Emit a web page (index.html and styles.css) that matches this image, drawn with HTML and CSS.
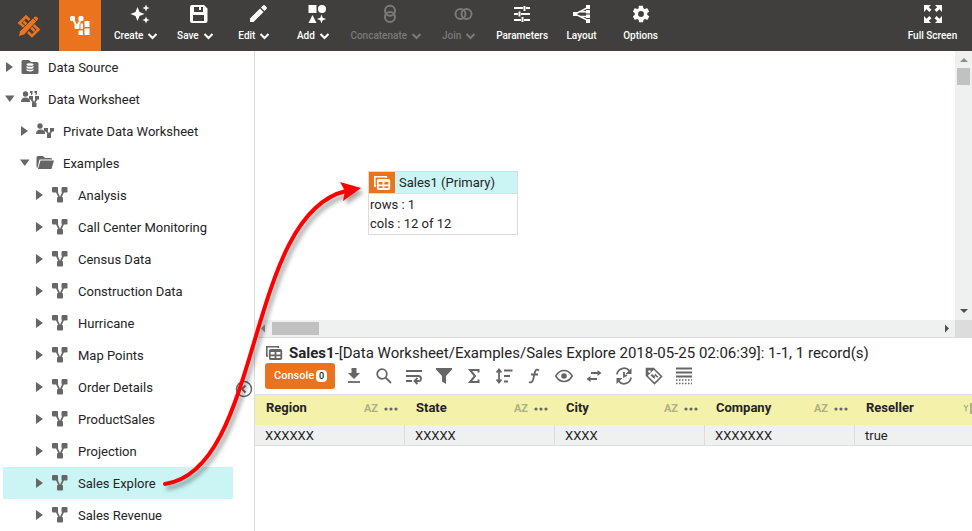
FILE: index.html
```html
<!DOCTYPE html>
<html lang="en">
<head>
<meta charset="utf-8">
<title>Data Worksheet</title>
<link rel="stylesheet" href="styles.css">
</head>
<body>
<svg class="defs" width="0" height="0" aria-hidden="true">
  <symbol id="chev" viewBox="0 0 22 10"><path d="M5.500 3l4 4 4-4" fill="none" stroke="currentColor" stroke-width="2"/></symbol>
  <symbol id="closed" viewBox="0 0 10 12"><path d="M1 1v10L8 6z" fill="currentColor"/></symbol>
  <symbol id="open" viewBox="0 0 10 12"><path d="M0 2.500h9.500L4.800 9z" fill="currentColor"/></symbol>
  <symbol id="sheet" viewBox="0 0 18 18"><path d="M5 4l4 9M13 4L9 13" stroke="currentColor" stroke-width="1.800"/><rect x="1" y="1" width="6" height="5.500" rx="1" fill="currentColor"/><rect x="10.500" y="1" width="6" height="5.500" rx="1" fill="currentColor"/><rect x="6" y="11" width="6" height="5.500" rx="1" fill="currentColor"/></symbol>
  <symbol id="tables" viewBox="0 0 18 16"><path d="M3 11H1.800V1.800h11.500V3" fill="none" stroke="currentColor" stroke-width="1.600"/><rect x="4.800" y="4.800" width="11.500" height="9.200" rx="1" fill="none" stroke="currentColor" stroke-width="1.800"/><path d="M4.500 6h12M4.500 10.300h12M10.500 6v8" stroke="currentColor" stroke-width="1.800"/></symbol>
</svg>

<header class="topbar">
  <button class="home" aria-label="Composer"><svg width="24" height="24" viewBox="0 0 24 24"><path d="M8 13.500L2.500 9 9 2.500 12.500 6M6.500 7.500L10 11M16 10.500l5.500 5L15 22l-4-4M17.500 17l-3.500-3.500" fill="none" stroke="currentColor" stroke-width="2.600"/><path d="M2.500 17.500L17.500 2.500q1.500-1 3 .5t.5 3L7 21l-5.500 1.500z" fill="currentColor" stroke="#403f3d" stroke-width=".8"/><path d="M16 4l4 4" stroke="#403f3d" stroke-width=".8"/></svg></button>
  <button class="mode" aria-label="Worksheet"><svg width="20" height="20" viewBox="0 0 20 20"><path d="M3 3l4 8M11 3l-4 8" stroke="#fff" stroke-width="2"/><g fill="#fff"><rect width="5" height="5" rx="1.500"/><rect x="8.500" width="5" height="5" rx="1.500"/><rect x="4.500" y="8" width="5" height="5" rx="1.500"/><rect x="14.500" y="5" width="5" height="6"/><rect x="14.500" y="12.500" width="5" height="6.500"/><rect x="8.500" y="14.500" width="4.500" height="4.500"/><path d="M10.500 7.500H13V13h-2.500z"/></g></svg></button>
  <nav class="tools">
    <button class="tool"><svg width="20" height="20" viewBox="0 0 20 20"><path d="M7.500 3l2 5 5 2-5 2-2 5-2-5-5-2 5-2zM16 .5l1 2.500 2.500 1-2.500 1-1 2.500-1-2.500-2.500-1 2.500-1zM16 12.500l1 2.500 2.500 1-2.500 1-1 2.500-1-2.500-2.500-1 2.500-1z" fill="currentColor"/></svg><span class="label">Create<svg class="chev"><use href="#chev"/></svg></span></button>
    <button class="tool"><svg width="20" height="20" viewBox="0 0 20 20"><path fill-rule="evenodd" d="M3 1h12l3.500 3.500V17q0 2-2 2H3q-2 0-2-2V3q0-2 2-2zM5 3v5h9V3h-2v3h-2V3zM4 11v6h11v-6z" fill="currentColor"/></svg><span class="label">Save<svg class="chev"><use href="#chev"/></svg></span></button>
    <button class="tool"><svg width="20" height="20" viewBox="0 0 20 20"><path d="M2 14.500L12 4.500 15.500 8l-10 10H2zM13 3.500l2-2q1-.8 2 0l1.500 1.500q.8 1 0 2l-2 2z" fill="currentColor"/></svg><span class="label">Edit<svg class="chev"><use href="#chev"/></svg></span></button>
    <button class="tool"><svg width="20" height="20" viewBox="0 0 20 20"><path d="M1.500 1h8v8h-8zM5.500 11l4 8h-8zM14.500 10.500l1.200 3.200 3.500 1.300-3.500 1.300-1.200 3.200-1.200-3.200L9.800 15l3.500-1.300z" fill="currentColor"/><circle cx="15" cy="5" r="4" fill="currentColor"/></svg><span class="label">Add<svg class="chev"><use href="#chev"/></svg></span></button>
    <button class="tool" disabled><svg width="20" height="20" viewBox="0 0 20 20"><g fill="none" stroke="currentColor" stroke-width="2"><circle cx="10" cy="6.800" r="5"/><circle cx="10" cy="13" r="5"/></g></svg><span class="label">Concatenate<svg class="chev"><use href="#chev"/></svg></span></button>
    <button class="tool" disabled><svg width="20" height="20" viewBox="0 0 20 20"><g fill="none" stroke="currentColor" stroke-width="2"><circle cx="7.500" cy="10" r="5"/><circle cx="13.500" cy="10" r="5"/></g></svg><span class="label">Join<svg class="chev"><use href="#chev"/></svg></span></button>
    <button class="tool"><svg width="20" height="20" viewBox="0 0 20 20"><path d="M2 4h9M14 4h4M12.500 2v5M2 10h4M9 10h9M7.500 7.500v5M2 16h7M12 16h6M10.500 13v5" stroke="currentColor" stroke-width="2"/></svg><span class="label">Parameters</span></button>
    <button class="tool"><svg width="20" height="20" viewBox="0 0 20 20"><path d="M16 3.500L3 10l13 6.500M8 7.500L16 8M8 12.500h8" fill="none" stroke="currentColor" stroke-width="1.400"/><path d="M1 8h4v4H1zM14 1h4v4h-4zM14 6h4v3.500h-4zM14 10.500h4V14h-4zM14 15h4v4h-4z" fill="currentColor"/></svg><span class="label">Layout</span></button>
    <button class="tool"><svg width="20" height="20" viewBox="0 0 24 24"><path fill="currentColor" d="M19.400 13c0-.3.100-.7.100-1s0-.7-.1-1l2.100-1.700c.2-.1.200-.4.100-.6l-2-3.500c-.1-.2-.4-.3-.6-.2l-2.500 1c-.5-.4-1.100-.7-1.700-1l-.4-2.600c0-.2-.2-.4-.5-.4h-4c-.2 0-.5.200-.5.400L9.200 5c-.6.300-1.200.6-1.700 1L5 5c-.2-.1-.5 0-.6.200l-2 3.500c-.1.200-.1.500.1.600L4.600 11c0 .3-.1.700-.1 1s0 .7.100 1l-2.100 1.700c-.2.100-.2.400-.1.600l2 3.500c.1.200.4.300.6.200l2.500-1c.5.400 1.100.7 1.700 1l.4 2.600c0 .2.200.4.500.4h4c.2 0 .5-.2.500-.4l.4-2.600c.6-.3 1.200-.6 1.700-1l2.500 1c.2.100.5 0 .6-.2l2-3.500c.1-.2.100-.5-.1-.6zM12 15.500a3.500 3.500 0 110-7 3.500 3.500 0 010 7z"/></svg><span class="label">Options</span></button>
  </nav>
  <button class="tool full"><svg width="20" height="20" viewBox="0 0 20 20"><path d="M1 1h7L5.800 3.200l2.700 2.600-2.200 2.200-2.700-2.700L1 8zM19 1h-7l2.200 2.200-2.700 2.600 2.200 2.200 2.700-2.700L19 8zM1 19h7l-2.200-2.200 2.700-2.600L6.300 12l-2.700 2.700L1 12zM19 19h-7l2.200-2.200-2.700-2.600 2.200-2.200 2.700 2.700L19 12z" fill="currentColor"/></svg><span class="label">Full Screen</span></button>
</header>

<main class="workspace">
  <aside class="sidebar">
    <ul class="tree">
      <li class="node"><svg class="twisty"><use href="#closed"/></svg><svg class="icon" viewBox="0 0 18 18"><path d="M2 2h6l2 2h6q1.500 0 1.500 1.500v9Q17.500 16 16 16H2Q.5 16 .5 14.500v-11Q.5 2 2 2z" fill="currentColor"/><g fill="#fff"><ellipse cx="9" cy="6.500" rx="3.500" ry="1.300"/><path d="M5.500 8q3.500 1.700 7 0v2q-3.500 1.700-7 0zM5.500 11q3.500 1.700 7 0v1.500q-3.500 2-7 0z"/></g></svg><a href="#source">Data Source</a></li>
      <li class="node"><svg class="twisty"><use href="#open"/></svg><svg class="icon" viewBox="0 0 18 18"><g fill="currentColor"><circle cx="4.500" cy="4" r="2.700"/><path d="M0 12q0-4.500 4.500-4.500T9 12zM9 1h2.500v3L10 5.500V3H9zM13.500 1H16v3l-1.500 1.500V3h-1zM8 6h4v3.500H8zM14 6h4v3.500h-4zM11 13h4.500v4H11z"/></g><path d="M10 8l3 6 3-6" fill="none" stroke="currentColor" stroke-width="1.700"/></svg><a href="#worksheet">Data Worksheet</a></li>
      <li class="node l1"><svg class="twisty"><use href="#closed"/></svg><svg class="icon" viewBox="0 0 18 18"><g fill="currentColor"><circle cx="4" cy="4" r="2.700"/><path d="M0 12q0-4.500 4.500-4.500T9 12zM8 6h4v3.500H8zM14 6h4v3.500h-4zM11 12h4v4h-4z"/></g><path d="M10 8l3 5 3-5" fill="none" stroke="currentColor" stroke-width="1.700"/></svg><a href="#private">Private Data Worksheet</a></li>
      <li class="node l1"><svg class="twisty"><use href="#open"/></svg><svg class="icon" viewBox="0 0 18 18"><path d="M2 2h5l2 2h6q1 0 1 1.500H3.500L1.500 14 .5 13V3.500Q.5 2 2 2zM4.500 6.500H18L15.500 15H2z" fill="currentColor"/></svg><a href="#examples">Examples</a></li>
      <li class="node l2"><svg class="twisty"><use href="#closed"/></svg><svg class="icon"><use href="#sheet"/></svg><a href="#analysis">Analysis</a></li>
      <li class="node l2"><svg class="twisty"><use href="#closed"/></svg><svg class="icon"><use href="#sheet"/></svg><a href="#calls">Call Center Monitoring</a></li>
      <li class="node l2"><svg class="twisty"><use href="#closed"/></svg><svg class="icon"><use href="#sheet"/></svg><a href="#census">Census Data</a></li>
      <li class="node l2"><svg class="twisty"><use href="#closed"/></svg><svg class="icon"><use href="#sheet"/></svg><a href="#construction">Construction Data</a></li>
      <li class="node l2"><svg class="twisty"><use href="#closed"/></svg><svg class="icon"><use href="#sheet"/></svg><a href="#hurricane">Hurricane</a></li>
      <li class="node l2"><svg class="twisty"><use href="#closed"/></svg><svg class="icon"><use href="#sheet"/></svg><a href="#map">Map Points</a></li>
      <li class="node l2"><svg class="twisty"><use href="#closed"/></svg><svg class="icon"><use href="#sheet"/></svg><a href="#orders">Order Details</a></li>
      <li class="node l2"><svg class="twisty"><use href="#closed"/></svg><svg class="icon"><use href="#sheet"/></svg><a href="#products">ProductSales</a></li>
      <li class="node l2"><svg class="twisty"><use href="#closed"/></svg><svg class="icon"><use href="#sheet"/></svg><a href="#projection">Projection</a></li>
      <li class="node l2 selected"><svg class="twisty"><use href="#closed"/></svg><svg class="icon"><use href="#sheet"/></svg><a href="#explore">Sales Explore</a></li>
      <li class="node l2"><svg class="twisty"><use href="#closed"/></svg><svg class="icon"><use href="#sheet"/></svg><a href="#revenue">Sales Revenue</a></li>
    </ul>
    <button class="collapse" aria-label="Collapse panel"><svg width="18" height="18" viewBox="0 0 18 18"><circle cx="9" cy="9" r="7.500" fill="#fff" stroke="currentColor" stroke-width="1.500"/><path d="M10.500 5.500L7 9l3.500 3.500" fill="none" stroke="currentColor" stroke-width="1.800"/></svg></button>
  </aside>

  <section class="work">
    <div class="graph">
      <div class="canvas">
        <article class="assembly">
          <h2 class="assembly-head"><span class="badge"><svg width="18" height="16"><use href="#tables"/></svg></span>Sales1 (Primary)</h2>
          <p>rows : 1</p>
          <p>cols : 12 of 12</p>
        </article>
      </div>
      <div class="vbar"><svg width="17" height="17" viewBox="0 0 17 17"><path d="M5 11l4-4 4 4z" fill="#8e8e8e"/></svg><span class="vthumb"></span><svg class="end" width="17" height="17" viewBox="0 0 17 17"><path d="M5 6l4 4 4-4z" fill="#505050"/></svg></div>
      <div class="hbar"><svg width="17" height="17" viewBox="0 0 17 17"><path d="M10 4.500v8l-4-4z" fill="#8e8e8e"/></svg><span class="hthumb"></span><svg class="end" width="17" height="17" viewBox="0 0 17 17"><path d="M7 4.500v8l4-4z" fill="#505050"/></svg></div>
      <div class="corner"></div>
    </div>

    <div class="preview">
      <div class="title"><svg width="18" height="16"><use href="#tables"/></svg><span><strong>Sales1</strong>-[Data Worksheet/Examples/Sales Explore 2018-05-25 02:06:39]: 1-1, 1 record(s)</span></div>
      <div class="actions">
        <button class="console">Console<span class="count">0</span></button>
        <button class="act" aria-label="Export"><svg viewBox="0 0 18 18"><path d="M6.500 1h5v5H15l-6 6-6-6h3.500z" fill="currentColor"/><path d="M3 15h12" stroke="currentColor" stroke-width="1.800"/></svg></button>
        <button class="act" aria-label="Search"><svg viewBox="0 0 18 18"><g fill="none" stroke="currentColor" stroke-width="1.800"><circle cx="7" cy="7" r="4.800"/><path d="M10.500 10.500L16 16"/></g></svg></button>
        <button class="act" aria-label="Wrap"><svg viewBox="0 0 18 18"><path d="M1 4h16M1 9h12.500q2.500 0 2.500 2.700T13.500 14H10M1 14h6M12.500 11L9.500 14l3 3" fill="none" stroke="currentColor" stroke-width="1.800"/></svg></button>
        <button class="act" aria-label="Filter"><svg viewBox="0 0 18 18"><path d="M1 1h16v1.500L11 9v8L7 14.500V9L1 2.500z" fill="currentColor"/></svg></button>
        <button class="act" aria-label="Aggregate"><svg viewBox="0 0 18 18"><path d="M13.500 5.500V3H5l5 6-5 6h8.500v-2.500" fill="none" stroke="currentColor" stroke-width="2"/></svg></button>
        <button class="act" aria-label="Sort"><svg viewBox="0 0 18 18"><path d="M4 3v12M1.500 5.500L4 2.500l2.500 3M1.500 12.500l2.500 3 2.500-3M9 3.500h8.500M9 9h6M9 14.500h4" fill="none" stroke="currentColor" stroke-width="1.800"/></svg></button>
        <button class="act" aria-label="Formula"><svg viewBox="0 0 18 18"><path d="M14 3.500q-3-2.500-4 1.500L8 13q-1 3.500-4 2M6 7.500h7" fill="none" stroke="currentColor" stroke-width="1.800"/></svg></button>
        <button class="act" aria-label="Visibility"><svg viewBox="0 0 18 18"><path d="M.8 9Q4 3.500 9 3.500T17.200 9Q14 14.500 9 14.500T.8 9z" fill="none" stroke="currentColor" stroke-width="1.600"/><circle cx="9" cy="9" r="2.800" fill="currentColor"/></svg></button>
        <button class="act" aria-label="Swap"><svg viewBox="0 0 18 18"><path d="M6 6h9M3 12h9" stroke="currentColor" stroke-width="1.800"/><path d="M12.500 3l4 3-4 3zM5.500 9l-4 3 4 3z" fill="currentColor"/></svg></button>
        <button class="act" aria-label="Refresh data"><svg viewBox="0 0 18 18"><path d="M2 7.500A7 7 0 0114.500 4M16 10.500A7 7 0 013.500 14M9 5v4.500l3-1.500" fill="none" stroke="currentColor" stroke-width="1.800"/><path d="M16.500 1v6h-6zM1.500 17v-6h6z" fill="currentColor"/></svg></button>
        <button class="act" aria-label="Tags"><svg viewBox="0 0 18 18"><path d="M1.500 1.500h7l8 8-7 7-8-8z" fill="none" stroke="currentColor" stroke-width="1.600"/><path d="M1 1h7.500l1 1L2 9.500l-1-1zM5.500 8.500l1.500-1.500 2.500 2 .5-2.500 3.500 3.500-1.500.5-2-1.500-.5 3z" fill="currentColor"/><circle cx="4.500" cy="4.500" r="1.300" fill="#fff"/></svg></button>
        <button class="act" aria-label="Row limit"><svg viewBox="0 0 18 18"><path d="M1 1.500h16M1 5.500h16M1 9.500h16" stroke="currentColor" stroke-width="2"/><path d="M1 13h16M1 16.500h16" stroke="currentColor" stroke-width="1.600" stroke-dasharray="1.500 1.500"/></svg></button>
      </div>
      <div class="scroller">
        <table class="data">
          <thead><tr>
            <th><div class="col">Region<span class="type">AZ</span><svg class="dots" viewBox="0 0 14 4"><g fill="currentColor"><circle cx="2" cy="2" r="1.600"/><circle cx="7" cy="2" r="1.600"/><circle cx="12" cy="2" r="1.600"/></g></svg></div></th>
            <th><div class="col">State<span class="type">AZ</span><svg class="dots" viewBox="0 0 14 4"><g fill="currentColor"><circle cx="2" cy="2" r="1.600"/><circle cx="7" cy="2" r="1.600"/><circle cx="12" cy="2" r="1.600"/></g></svg></div></th>
            <th><div class="col">City<span class="type">AZ</span><svg class="dots" viewBox="0 0 14 4"><g fill="currentColor"><circle cx="2" cy="2" r="1.600"/><circle cx="7" cy="2" r="1.600"/><circle cx="12" cy="2" r="1.600"/></g></svg></div></th>
            <th><div class="col">Company<span class="type">AZ</span><svg class="dots" viewBox="0 0 14 4"><g fill="currentColor"><circle cx="2" cy="2" r="1.600"/><circle cx="7" cy="2" r="1.600"/><circle cx="12" cy="2" r="1.600"/></g></svg></div></th>
            <th><div class="col">Reseller<svg class="bool" width="17" height="12" viewBox="0 0 17 12"><path d="M1 3l2 3 2-3M3 6v3.500" fill="none" stroke="currentColor" stroke-width="1.300"/><path d="M7 1h10v11H7z" fill="currentColor"/></svg></div></th>
          </tr></thead>
          <tbody><tr><td>XXXXXX</td><td>XXXXX</td><td>XXXX</td><td>XXXXXXX</td><td>true</td></tr></tbody>
        </table>
      </div>
    </div>
  </section>
</main>
<svg class="pointer" width="240" height="340" viewBox="150 170 240 340" aria-hidden="true"><path d="M165 484C263 470 245 215 346 191" fill="none" stroke="#f00" stroke-width="4" stroke-linecap="round"/><path d="M361 188l-21-6 5 9-2 10z" fill="#f00"/></svg>
</body>
</html>
```
FILE: styles.css
```css
* { box-sizing: border-box; }
body {
  margin: 0;
  height: 100vh;
  display: flex;
  flex-direction: column;
  overflow: hidden;
  position: relative;
  background: #fff;
  color: #242424;
  font: 13px/20px Roboto, sans-serif;
}
button {
  margin: 0;
  padding: 0;
  border: 0;
  background: none;
  color: inherit;
  font: inherit;
}
svg { display: block; flex: none; }
.defs { position: absolute; }

.topbar {
  flex: none;
  height: 51px;
  display: flex;
  background: #403f3d;
  color: #fff;
}
.home { width: 59px; padding-right: 2px; display: grid; place-items: center; color: #ec731e; }
.mode { width: 42px; display: grid; place-items: center; background: #ec731e; }
.tools { display: flex; margin-left: 9px; }
.tool {
  min-width: 59px;
  padding: 4px 4px 0;
  display: flex;
  flex-direction: column;
  align-items: center;
  gap: 5px;
  font-size: 10px;
  line-height: 14px;
  font-weight: 500;
}
.tool:disabled { color: #7b7a78; }
.label { display: flex; align-items: center; white-space: nowrap; }
.chev { width: 22px; height: 10px; }
.full { margin-left: auto; margin-right: 10px; }

.workspace { flex: 1; min-height: 0; display: flex; }
.sidebar {
  flex: none;
  width: 255px;
  position: relative;
  overflow: hidden;
  border-right: 1px solid #dcdcdc;
}
.tree { list-style: none; margin: 0 21px 0 3px; padding: 0; }
.node {
  display: flex;
  align-items: center;
  height: 32px;
  padding-left: 2px;
  white-space: nowrap;
}
.node.l1 { padding-left: 17px; }
.node.l2 { padding-left: 32px; }
.selected { background: #cbf5f5; }
.node a { margin-left: 9px; padding-top: 2px; color: inherit; text-decoration: none; }
.twisty { width: 10px; height: 12px; color: #666; }
.icon { width: 18px; height: 18px; margin-left: 6px; color: #666; }
.collapse { position: absolute; right: 1px; top: 329px; color: #666; }

.work {
  flex: 1;
  min-width: 0;
  display: grid;
  grid-template-columns: minmax(0, 1fr);
  grid-template-rows: minmax(0, 3fr) minmax(193px, 2fr);
}
.graph {
  display: grid;
  grid-template-columns: 1fr 17px;
  grid-template-rows: 1fr 17px;
  border-bottom: 1px solid #dcdcdc;
}
.canvas { position: relative; }
.assembly {
  position: absolute;
  left: 113px;
  top: 120px;
  width: 150px;
  padding-bottom: 1px;
  border: 1px solid #dcdcdc;
  background: #fff;
}
.assembly-head {
  display: flex;
  align-items: center;
  gap: 4px;
  height: 22px;
  margin: 0 0 1px;
  border-bottom: 1px solid #dcdcdc;
  background: #cbf5f5;
  font-size: 13px;
  font-weight: 400;
}
.badge {
  width: 26px;
  height: 21px;
  display: grid;
  place-items: center;
  background: #ec731e;
  color: #fff;
}
.assembly p { margin: 0; padding-left: 1px; line-height: 19px; }
.vbar, .hbar { display: flex; background: #eff1f1; }
.vbar { flex-direction: column; align-items: center; }
.hbar { align-items: center; }
.vthumb { width: 13px; height: 17px; background: #c1c1c1; }
.hthumb { width: 47px; height: 13px; background: #c1c1c1; }
.vbar .end { margin-top: auto; }
.hbar .end { margin-left: auto; }
.corner { background: #dcdcdc; }

.preview { display: flex; flex-direction: column; min-height: 0; }
.title {
  display: flex;
  align-items: center;
  gap: 6px;
  height: 25px;
  padding: 5px 0 0 10px;
  font-size: 15px;
  white-space: nowrap;
}
.title strong { font-weight: 700; }
.title svg, .act { color: #666; }
.actions { display: flex; align-items: center; padding: 0 10px 5px; height: 31px; }
.console {
  display: flex;
  align-items: center;
  gap: 2px;
  height: 26px;
  margin-right: 4px;
  padding: 0 8px 0 9px;
  border-radius: 3px;
  background: #ec731e;
  color: #fff;
  font-size: 11px;
  font-weight: 500;
}
.count {
  width: 11px;
  border-radius: 4px;
  background: #fff;
  color: #242424;
  font-size: 9px;
  line-height: 12px;
  text-align: center;
}
.act { width: 30px; display: grid; place-items: center; }
.act svg { width: 18px; height: 18px; }

.scroller { overflow: hidden; border-top: 1px solid #dcdcdc; }
.data { width: 750px; table-layout: fixed; border-collapse: separate; border-spacing: 0; }
.data th {
  height: 30px;
  padding: 0 7px 4px 11px;
  background: #f3f1aa;
  text-align: left;
  font-weight: 700;
}
.col { display: flex; align-items: center; }
.type { margin-left: auto; padding-top: 2px; color: #b2b083; font-size: 11px; }
.dots { width: 14px; height: 4px; margin: 2px 0 0 6px; color: #666; }
.bool { margin-left: auto; margin-right: 18px; color: #b2b083; }
.data td {
  height: 21px;
  padding: 1px 10px 0;
  line-height: 19px;
  border-right: 1px solid #dcdcdc;
  border-bottom: 1px solid #dcdcdc;
  background: #eff1f1;
}

.pointer {
  position: absolute;
  left: 150px;
  top: 170px;
  pointer-events: none;
  filter: drop-shadow(3px 4px 2px rgba(0, 0, 0, 0.35));
}
```
